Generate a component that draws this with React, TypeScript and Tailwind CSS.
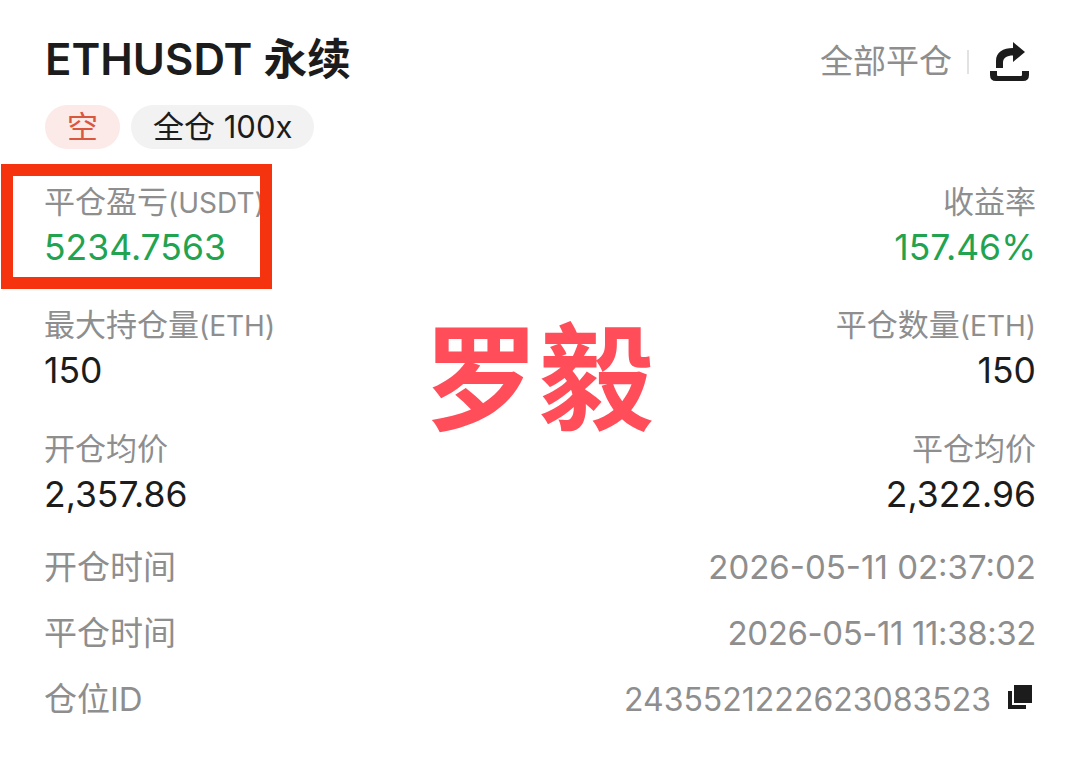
import React from 'react';

const FONT = "font-['Inter','Noto_Sans_CJK_SC',sans-serif]";

const STATS = [
  { left: '最大持仓量', leftUnit: '(ETH)', leftValue: '150', right: '平仓数量', rightUnit: '(ETH)', rightValue: '150', gap: 'mt-[32px]' },
  { left: '开仓均价', leftUnit: '', leftValue: '2,357.86', right: '平仓均价', rightUnit: '', rightValue: '2,322.96', gap: 'mt-[33px]' },
];

function Stat({ label, unit, value, green, right }: { label: string; unit?: string; value: string; green?: boolean; right?: boolean }) {
  return (
    <div className={right ? 'text-right' : ''}>
      <div className="h-[44px] text-[31px] leading-[44px] text-[#8e8e8e]">
        {label}
        {unit && <span className="text-[28px]">{unit}</span>}
      </div>
      <div className={`mt-[1px] h-[46px] text-[35.5px] leading-[46px] ${green ? 'text-[#22a350]' : 'text-[#1c1c1c]'}`}>{value}</div>
    </div>
  );
}

function ShareIcon() {
  return (
    <svg width="40" height="40" viewBox="0 0 40 40" fill="#1c1c1c">
      <path d="M23 0 L35 10 L23 20 L23 13.5 C17 13.5 13 15.5 13 21 L13 26 L6 26 L6 19 C6 10 13 6 23 6 Z" />
      <path d="M0 29 H7 V33 Q7 34 8 34 H31 Q32 34 32 33 V29 H39 V33 Q39 39 33 39 H6 Q0 39 0 33 Z" />
    </svg>
  );
}

function CopyIcon() {
  return (
    <svg width="26" height="26" viewBox="0 0 26 26" fill="#1c1c1c">
      <rect x="7" y="1" width="18" height="18" />
      <path d="M1 7 L5 7 L5 21 L19 21 L19 25 L1 25 Z" />
    </svg>
  );
}

export default function App() {
  return (
    <div className={`relative h-[758px] w-[1080px] overflow-hidden bg-white pl-[44px] pr-[44px] pt-[32px] ${FONT}`}>
      {/* Header */}
      <div className="flex h-[56px] items-center justify-between">
        <h1 className="ml-[1px] text-[43.7px] font-semibold leading-[56px] text-[#1c1c1c]">ETHUSDT 永续</h1>
        <div className="mr-[6px] flex items-center pt-[4px]">
          <span className="text-[33px] text-[#8e8e8e]">全部平仓</span>
          <span className="ml-[15px] mr-[21px] h-[24px] w-[2px] bg-[#e2e2e2]" />
          <ShareIcon />
        </div>
      </div>

      {/* Tags */}
      <div className="ml-[1px] mt-[17px] flex gap-[11px] text-[31px] leading-[44px]">
        <span className="h-[44px] w-[75px] rounded-full bg-[#fbeae7] text-center text-[#d9573f]">空</span>
        <span className="h-[44px] rounded-full bg-[#f2f2f2] px-[22px] text-[#1c1c1c]">全仓 100x</span>
      </div>

      {/* Stats */}
      <div className="mt-[31px] flex justify-between">
        <Stat label="平仓盈亏" unit="(USDT)" value="5234.7563" green />
        <Stat label="收益率" value="157.46%" green right />
      </div>
      {STATS.map((s) => (
        <div key={s.left} className={`${s.gap} flex justify-between`}>
          <Stat label={s.left} unit={s.leftUnit} value={s.leftValue} />
          <Stat label={s.right} unit={s.rightUnit} value={s.rightValue} right />
        </div>
      ))}

      {/* Time rows */}
      <div className="mt-[17px] flex h-[66px] items-center justify-between text-[33px] text-[#8e8e8e]">
        <span>开仓时间</span>
        <span>2026-05-11 02:37:02</span>
      </div>
      <div className="flex h-[66px] items-center justify-between text-[33px] text-[#8e8e8e]">
        <span>平仓时间</span>
        <span className="tracking-[-0.4px]">2026-05-11 11:38:32</span>
      </div>
      <div className="flex h-[66px] items-center justify-between text-[33px] text-[#8e8e8e]">
        <span>仓位ID</span>
        <span className="mr-[3px] flex items-center gap-[16px] text-[32px]">
          2435521222623083523
          <span className="mb-[6px]">
            <CopyIcon />
          </span>
        </span>
      </div>

      {/* Annotation box */}
      <div className="absolute left-[1px] top-[164px] h-[125px] w-[271px] border-[12px] border-[#f5330f]" />

      {/* Watermark */}
      <div className="absolute left-[424px] top-[315px] text-[115px] font-bold leading-[130px] text-[#ff4d5a]">罗毅</div>
    </div>
  );
}
